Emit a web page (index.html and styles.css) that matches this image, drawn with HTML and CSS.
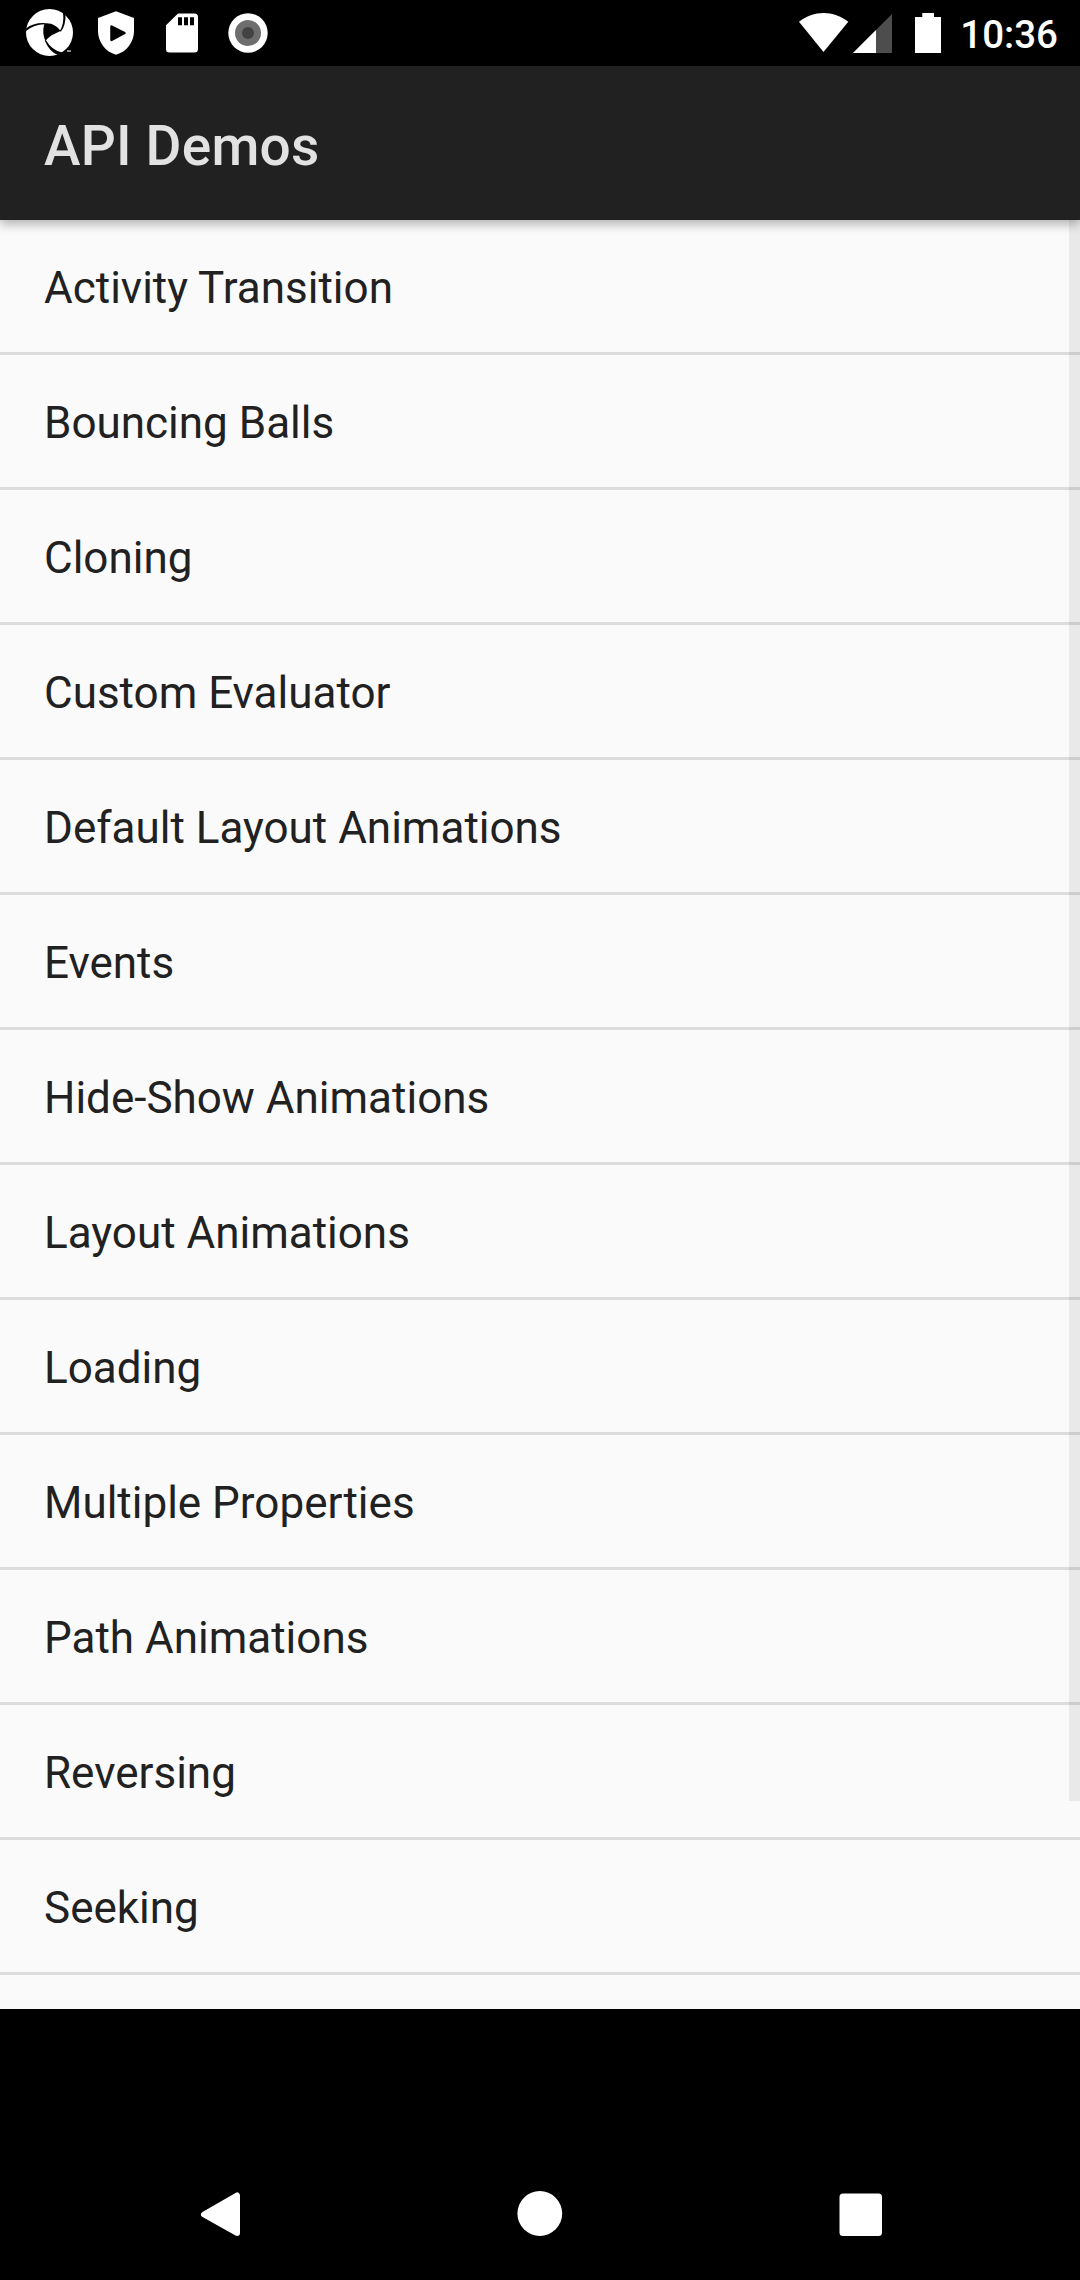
FILE: index.html
```html
<!DOCTYPE html>
<html lang="en">
<head>
<meta charset="utf-8">
<title>API Demos</title>
<link rel="stylesheet" href="styles.css">
</head>
<body>
<div class="screen">
  <header class="status-bar">
    <div class="notifications">
      <svg class="icon" width="48" height="48" viewBox="0 0 48 48">
        <circle cx="23.500" cy="23.500" r="23.500" fill="#fff"/>
        <path d="M18.500 14.500 C25 13.500 31 17 34.500 22 C29 24.500 23 27 19.500 32 C16.500 26 17 19 18.500 14.500Z" fill="#000"/>
        <path d="M0 19.500 Q7 13.500 19 14 L18.500 15.300 Q8 15.500 0 22Z" fill="#000"/>
        <path d="M33.700 22.300 Q38.500 15 37 3 L39.500 5 Q40 16 35 22.500Z" fill="#000"/>
        <path d="M18.700 31.500 Q23.500 42.500 31 45.500 L36 43.500 Q26 41.500 19.800 31Z" fill="#000"/>
        <path d="M30 48 L32.500 43.800 L40.500 42.300 L48 41V48Z" fill="#000"/>
        <path d="M41 41.300h4v1.500h-4z" fill="#bbb"/>
      </svg>
      <svg class="icon" width="36" height="44" viewBox="0 0 36 44">
        <path d="M18 0.300 L36 7 V20 C36 31 28.500 41 18 43.700 C7.500 41 0 31 0 20 V7Z" fill="#fff"/>
        <path d="M13.500 15.500 L26.500 22 L13.500 29Z" fill="#000" stroke="#000" stroke-width="2.500" stroke-linejoin="round"/>
      </svg>
      <svg class="icon" width="32" height="40" viewBox="0 0 32 40">
        <path d="M12 0.500H28.500Q32 0.500 32 4V36Q32 39.500 28.500 39.500H3.500Q0 39.500 0 36V12.300Z" fill="#fff"/>
        <path d="M12 4.300h4v8h-4zM18 4.300h4v8h-4zM24 4.300h4v8h-4z" fill="#000"/>
      </svg>
      <svg class="icon" width="40" height="40" viewBox="0 0 40 40">
        <circle cx="20" cy="20" r="19.700" fill="#fff"/>
        <circle cx="20" cy="20" r="13" fill="#6e6e6e"/>
        <circle cx="20" cy="20" r="6" fill="#424242"/>
      </svg>
    </div>
    <div class="system">
      <svg class="wifi" width="50" height="40" viewBox="0 0 50 40">
        <path d="M24.500 39 L0 8.700 C14.500 -2.900 34.500 -2.900 49.300 8.700Z" fill="#fff"/>
      </svg>
      <svg class="signal" width="39" height="39" viewBox="0 0 39 39">
        <path d="M39 0V39H0Z" fill="#4d4d4d"/>
        <path d="M23 16V39H0Z" fill="#fff"/>
      </svg>
      <svg class="battery" width="26" height="40" viewBox="0 0 26 40">
        <path d="M7.300 0H19V4H26V40H0V4H7.300Z" fill="#fff"/>
      </svg>
      <span class="clock">10:36</span>
    </div>
  </header>
  <div class="app-bar"><h1 class="title">API Demos</h1></div>
  <main class="content">
    <ul class="list">
      <li class="row">Activity Transition</li>
      <li class="row">Bouncing Balls</li>
      <li class="row">Cloning</li>
      <li class="row">Custom Evaluator</li>
      <li class="row">Default Layout Animations</li>
      <li class="row">Events</li>
      <li class="row">Hide-Show Animations</li>
      <li class="row">Layout Animations</li>
      <li class="row">Loading</li>
      <li class="row">Multiple Properties</li>
      <li class="row">Path Animations</li>
      <li class="row">Reversing</li>
      <li class="row">Seeking</li>
    </ul>
    <div class="scrollbar"></div>
  </main>
  <nav class="nav-bar">
    <svg width="40" height="46" viewBox="0 0 40 46">
      <path d="M37 4.500V42L4 23.500Z" fill="#fff" stroke="#fff" stroke-width="6" stroke-linejoin="round"/>
    </svg>
    <svg width="46" height="46" viewBox="0 0 46 46"><circle cx="22.800" cy="22.500" r="22.400" fill="#fff"/></svg>
    <svg width="44" height="46" viewBox="0 0 44 46"><rect x="0.500" y="2.500" width="42.500" height="42.500" rx="3.500" fill="#fff"/></svg>
  </nav>
</div>
</body>
</html>
```
FILE: styles.css
```css
* { box-sizing: border-box; }

body {
  margin: 0;
  background: #000;
  font-family: Roboto, "Liberation Sans", sans-serif;
}

svg { display: block; flex: none; }

.screen {
  display: flex;
  flex-direction: column;
  width: 1080px;
  height: 2280px;
  overflow: hidden;
}

.status-bar {
  display: flex;
  flex: none;
  justify-content: space-between;
  height: 66px;
  padding: 0 22px 0 26px;
}

.notifications,
.system {
  display: flex;
  align-items: center;
}

.notifications .icon:nth-child(2) { margin-left: 24px; }
.notifications .icon:nth-child(3) { margin-left: 32px; }
.notifications .icon:nth-child(4) { margin-left: 30px; }

.signal { margin-left: 4px; }
.battery { margin-left: 23px; }

.clock {
  margin-left: 19px;
  padding-top: 2px;
  color: #fff;
  font-size: 38.500px;
  font-weight: 500;
  line-height: 45px;
}

.app-bar {
  display: flex;
  flex: none;
  align-items: center;
  position: relative;
  z-index: 1;
  height: 154px;
  padding: 6px 44px 0;
  background: #212121;
  box-shadow: 0 4px 10px rgba(0, 0, 0, 0.3);
}

.title {
  margin: 0;
  color: #e2e2e2;
  font-size: 55px;
  font-weight: 500;
  letter-spacing: 0.200px;
  line-height: 64px;
}

.content {
  position: relative;
  flex: none;
  height: 1789px;
  background: #fafafa;
}

.list {
  margin: 0;
  padding: 0;
  list-style: none;
}

.row {
  display: flex;
  align-items: center;
  height: 135px;
  padding: 3px 44px 0;
  border-bottom: 3px solid #dcdcdc;
  color: #212121;
  font-size: 44px;
  line-height: 52px;
}

.scrollbar {
  position: absolute;
  top: 0;
  right: 0;
  width: 11px;
  height: 1581px;
  background: rgba(0, 0, 0, 0.067);
}

.nav-bar {
  display: flex;
  flex: 1;
  align-items: flex-end;
  justify-content: space-between;
  padding: 0 197px 43px 200px;
}
```
